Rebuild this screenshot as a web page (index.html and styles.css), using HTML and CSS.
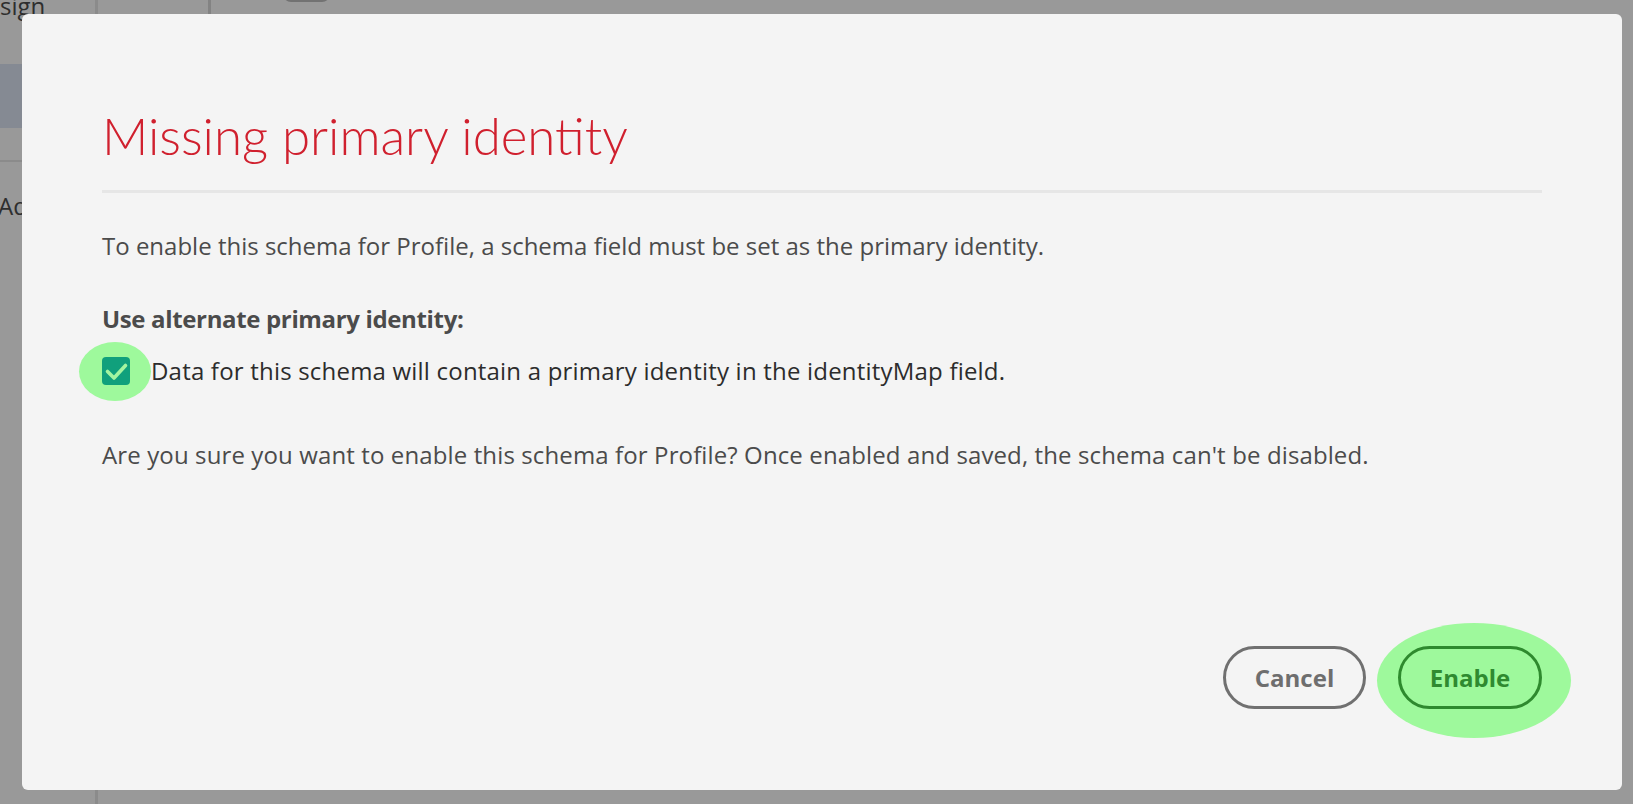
FILE: index.html
```html
<!DOCTYPE html>
<html lang="en">
<head>
<meta charset="utf-8">
<title>Missing primary identity</title>
<link rel="stylesheet" href="styles.css">
</head>
<body>
<div class="app">
  <aside class="nav">
    <div class="nav-top">sign</div>
    <div class="nav-item nav-active"></div>
    <div class="nav-sep"></div>
    <div class="nav-item nav-text">Ad</div>
  </aside>
  <div class="main">
    <div class="toolbar">
      <div class="tool-cell"></div>
      <div class="tool-btn"></div>
    </div>
  </div>
</div>

<div class="dialog" role="dialog" aria-labelledby="dlg-title">
  <h1 class="dialog-title" id="dlg-title">Missing primary identity</h1>
  <div class="dialog-divider"></div>
  <p class="text text-first">To enable this schema for Profile, a schema field must be set as the primary identity.</p>
  <p class="text text-bold">Use alternate primary identity:</p>
  <label class="check-row">
    <span class="check-wrap">
      <span class="highlight hl-check"></span>
      <span class="checkbox">
        <svg viewBox="0 0 28 28" width="28" height="28"><path d="M5.5 14.5 L12 21 L23.5 8.5" fill="none" stroke="#a4f5a0" stroke-width="3.6" stroke-linecap="round" stroke-linejoin="round"/></svg>
      </span>
    </span>
    <span class="check-label">Data for this schema will contain a primary identity in the identityMap field.</span>
  </label>
  <p class="text text-question">Are you sure you want to enable this schema for Profile? Once enabled and saved, the schema can't be disabled.</p>
  <div class="dialog-footer">
    <button class="btn btn-cancel">Cancel</button>
    <span class="btn-wrap">
      <span class="highlight hl-enable"></span>
      <button class="btn btn-enable">Enable</button>
    </span>
  </div>
</div>
</body>
</html>
```
FILE: styles.css
```css
html, body {
  margin: 0;
  padding: 0;
  height: 100%;
}
body {
  background: #999999;
  font-family: "Open Sans", "Liberation Sans", sans-serif;
  overflow: hidden;
}

/* underlying (dimmed) application */
.app {
  display: flex;
  height: 804px;
}
.nav {
  width: 95px;
  flex: none;
  border-right: 3px solid #8b8b8b;
  display: flex;
  flex-direction: column;
  overflow: hidden;
}
.nav-top {
  font-size: 24px;
  line-height: 24px;
  color: #2e2e2e;
  margin-top: -6px;
  height: 70px;
}
.nav-item {
  height: 64px;
}
.nav-active {
  background: #858a93;
}
.nav-sep {
  margin-top: 32px;
  height: 2px;
  background: #8b8b8b;
}
.nav-text {
  font-size: 24px;
  line-height: 24px;
  color: #2e2e2e;
  padding-top: 32px;
  margin-left: -2px;
}
.main {
  flex: 1;
}
.toolbar {
  display: flex;
  align-items: flex-start;
  height: 20px;
}
.tool-cell {
  width: 110px;
  height: 20px;
  border-right: 3px solid #838383;
}
.tool-btn {
  margin-left: 72px;
  margin-top: -28px;
  width: 47px;
  height: 30px;
  border-radius: 8px;
  background: #727272;
}

/* dialog */
.dialog {
  position: fixed;
  left: 22px;
  top: 14px;
  width: 1600px;
  height: 776px;
  box-sizing: border-box;
  padding: 91px 80px 81px;
  background: #f4f4f4;
  border-radius: 6px;
  display: flex;
  flex-direction: column;
}
.dialog-title {
  margin: 0;
  font-family: "Lato", "Open Sans", sans-serif;
  font-weight: 300;
  font-size: 51px;
  line-height: 61px;
  color: #d0202e;
}
.dialog-divider {
  margin-top: 24px;
  height: 3px;
  background: #e6e6e6;
}
.text {
  margin: 0;
  font-size: 24px;
  line-height: 32px;
  color: #4b4b4b;
}
.text-first {
  margin-top: 37px;
}
.text-bold {
  margin-top: 41px;
  font-weight: 700;
  letter-spacing: -0.35px;
}
.check-row {
  margin-top: 20px;
  display: flex;
  align-items: center;
  height: 32px;
}
.check-wrap {
  position: relative;
  width: 28px;
  height: 28px;
  flex: none;
}
.highlight {
  position: absolute;
  background: #9ef99c;
  border-radius: 50%;
}
.hl-check {
  left: -23px;
  top: -15px;
  width: 72px;
  height: 59px;
}
.checkbox {
  position: relative;
  display: block;
  width: 28px;
  height: 28px;
  border-radius: 4px;
  background: #10a07c;
}
.checkbox svg {
  display: block;
}
.check-label {
  margin-left: 21px;
  font-size: 24px;
  line-height: 32px;
  color: #2c2c2c;
  letter-spacing: 0.2px;
}
.text-question {
  margin-top: 52px;
  letter-spacing: 0.12px;
}
.dialog-footer {
  margin-top: auto;
  display: flex;
  justify-content: flex-end;
  gap: 32px;
}
.btn-wrap {
  position: relative;
  display: block;
}
.hl-enable {
  left: -21px;
  top: -23px;
  width: 194px;
  height: 115px;
}
.btn {
  position: relative;
  box-sizing: border-box;
  height: 63px;
  border-radius: 32px;
  border: 3px solid #707070;
  background: transparent;
  font-family: "Open Sans", "Liberation Sans", sans-serif;
  font-weight: 700;
  font-size: 24px;
  line-height: 54px;
  color: #6e6e6e;
  padding: 0;
  cursor: pointer;
}
.btn-cancel {
  width: 143px;
}
.btn-enable {
  width: 144px;
  border-color: #2e8a2e;
  color: #2f8a30;
}
```
